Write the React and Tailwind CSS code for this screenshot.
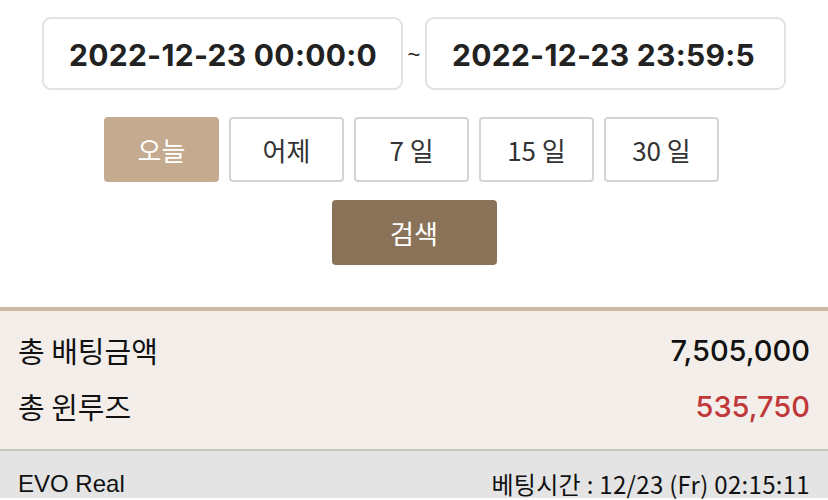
const periods = ["오늘", "어제", "7 일", "15 일", "30 일"];

export default function App() {
    const kr = { fontFamily: "'Noto Sans CJK KR', 'Noto Sans', sans-serif" };
    const num = { fontFamily: "Inter, 'Noto Sans', sans-serif" };

    return (
        <div className="w-[828px] h-[500px] overflow-hidden bg-white" style={kr}>
            <div className="flex flex-row items-center justify-center pt-[17px]">
                <div className="w-[361px] h-[73px] flex items-center px-[25px] pt-[3px] border-2 border-[#e2e2e2] rounded-[9px] overflow-hidden">
                    <span className="text-[30px] font-bold text-[#222] whitespace-nowrap tracking-[0.3px] leading-none" style={num}>2022-12-23 00:00:0</span>
                </div>
                <div className="w-[22px] text-center text-[22px] text-[#222] pt-[2px] leading-none" style={{ fontFamily: "'Liberation Sans', Arial, sans-serif" }}>~</div>
                <div className="w-[361px] h-[73px] flex items-center px-[25px] pt-[3px] border-2 border-[#e2e2e2] rounded-[9px] overflow-hidden">
                    <span className="text-[30px] font-bold text-[#222] whitespace-nowrap tracking-[0.3px] leading-none" style={num}>2022-12-23 23:59:5</span>
                </div>
            </div>

            <div className="flex flex-row gap-[10px] pl-[104px] mt-[27px]">
                {periods.map((p, i) => (
                    <div
                        key={p}
                        className={
                            i === 0
                                ? "w-[115px] h-[65px] flex items-center justify-center rounded-[4px] bg-[#c4aa8f] text-white text-[26px]"
                                : "w-[115px] h-[65px] flex items-center justify-center rounded-[4px] border-2 border-[#d4d4d4] text-[#333] text-[26px]"
                        }
                    >
                        {p}
                    </div>
                ))}
            </div>

            <div className="flex justify-center mt-[18px]">
                <div className="w-[165px] h-[65px] flex items-center justify-center rounded-[4px] bg-[#8a7259] text-white text-[26px]">검색</div>
            </div>

            <div className="mt-[42px] border-t-4 border-[#cdb9a3] bg-[#f3eee9] h-[142px] flex flex-col px-[18px] pt-[20px]">
                <div className="flex flex-row justify-between items-center h-[40px]">
                    <span className="text-[29px] text-[#111]">총 배팅금액</span>
                    <span className="text-[29px] font-medium text-[#111]" style={num}>7,505,000</span>
                </div>
                <div className="flex flex-row justify-between items-center h-[40px] mt-[16px]">
                    <span className="text-[29px] text-[#111]">총 윈루즈</span>
                    <span className="text-[29px] font-medium text-[#c0373a]" style={num}>535,750</span>
                </div>
            </div>

            <div className="border-t-2 border-[#c9c5c1] bg-[#e4e4e4] h-[49px] flex flex-row justify-between items-center px-[18px] pt-[19px]">
                <span className="text-[24px] text-[#111] leading-none" style={{ fontFamily: "'Liberation Sans', Arial, sans-serif" }}>EVO Real</span>
                <span className="text-[24px] text-[#111] leading-none tracking-[0.3px]">베팅시간 : 12/23 (Fr) 02:15:11</span>
            </div>
        </div>
    );
}
